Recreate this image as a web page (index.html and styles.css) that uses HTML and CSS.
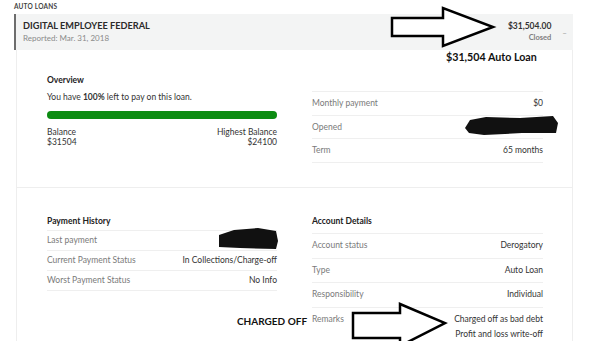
FILE: index.html
```html
<!DOCTYPE html>
<html>
<head>
    <meta charset="UTF-8">
    <title>Auto Loans</title>
    <link rel="stylesheet" href="styles.css">
</head>
<body>
<div class="page">
    <div class="section-label">AUTO LOANS</div>

    <div class="account">
        <div class="account-head">
            <div class="lender">
                <div class="lender-name">DIGITAL EMPLOYEE FEDERAL</div>
                <div class="lender-date">Reported: Mar. 31, 2018</div>
            </div>
            <div class="head-right">
                <div class="amount">
                    <div class="amount-value">$31,504.00</div>
                    <div class="amount-status">Closed</div>
                </div>
                <div class="toggle">&ndash;</div>
            </div>
        </div>

        <div class="account-body">
            <div class="block block-top">
                <div class="col">
                    <div class="col-title">Overview</div>
                    <div class="overview-text">You have <b>100%</b> left to pay on this loan.</div>
                    <div class="bar"><div class="bar-fill" style="width: 100%"></div></div>
                    <div class="balances">
                        <div>
                            <div>Balance</div>
                            <div>$31504</div>
                        </div>
                        <div class="right">
                            <div>Highest Balance</div>
                            <div>$24100</div>
                        </div>
                    </div>
                </div>
                <div class="col col-plain">
                    <div class="row"><span class="label">Monthly payment</span><span class="value">$0</span></div>
                    <div class="row"><span class="label">Opened</span><span class="value"></span></div>
                    <div class="row"><span class="label">Term</span><span class="value">65 months</span></div>
                </div>
            </div>

            <div class="block block-bottom">
                <div class="col history">
                    <div class="col-title">Payment History</div>
                    <div class="row"><span class="label">Last payment</span><span class="value"></span></div>
                    <div class="row"><span class="label">Current Payment Status</span><span class="value">In Collections/Charge-off</span></div>
                    <div class="row"><span class="label">Worst Payment Status</span><span class="value">No Info</span></div>
                </div>
                <div class="col details">
                    <div class="col-title">Account Details</div>
                    <div class="row"><span class="label">Account status</span><span class="value">Derogatory</span></div>
                    <div class="row"><span class="label">Type</span><span class="value">Auto Loan</span></div>
                    <div class="row"><span class="label">Responsibility</span><span class="value">Individual</span></div>
                    <div class="row remarks">
                        <span class="label">Remarks</span>
                        <span class="value">
                            <span class="line">Charged off as bad debt</span>
                            <span class="line">Profit and loss write-off</span>
                        </span>
                    </div>
                </div>
            </div>
        </div>
    </div>

    <!-- annotations drawn over the screenshot -->
    <div class="note note-loan">$31,504 Auto Loan</div>
    <div class="note note-charged">CHARGED OFF</div>
    <svg class="marks" width="600" height="341" viewBox="0 0 600 341">
        <polygon points="392,18 443,18 443,8 493,27 443,46 443,36 392,36" fill="#fff" stroke="#000" stroke-width="2.5" stroke-linejoin="miter"/>
        <polygon points="353,313 400,313 400,304 445,323 400,346 400,338 353,338" fill="#fff" stroke="#000" stroke-width="2.5"/>
        <polygon points="465,128 470,120 486,117 520,118 553,116 558,123 556,133 522,133 484,135 469,133" fill="#111"/>
        <polygon points="219,235 234,230 258,228 276,231 278,241 276,249 240,248 219,247" fill="#111"/>
    </svg>
</div>
</body>
</html>
```

FILE: styles.css
```css
body {
    margin: 0;
    font-family: Lato, "Open Sans", sans-serif;
    color: #333;
    background-color: #fff;
}
.page {
    position: relative;
    width: 600px;
    height: 341px;
    overflow: hidden;
}
.section-label {
    font-size: 6.5px;
    font-weight: bold;
    letter-spacing: 0.2px;
    color: #444;
    padding: 3px 0 0 14px;
    height: 12px;
    line-height: 8px;
    box-sizing: border-box;
}
.account {
    margin: 2px 27px 0 14px;
}
.account-head {
    display: flex;
    justify-content: space-between;
    align-items: center;
    height: 36px;
    background-color: #f3f4f4;
    border-left: 2px solid #6d6d6d;
    padding: 0 6px 0 7px;
}
.lender-name {
    font-size: 9.2px;
    font-weight: bold;
    line-height: 12px;
    color: #2b2b2b;
}
.lender-date {
    font-size: 8px;
    line-height: 12px;
    color: #8a8a8a;
}
.head-right {
    display: flex;
    align-items: center;
}
.amount {
    text-align: right;
}
.amount-value {
    font-size: 8.5px;
    font-weight: bold;
    line-height: 11px;
    color: #333;
}
.amount-status {
    font-size: 7.5px;
    font-weight: bold;
    line-height: 11px;
    color: #7f7f7f;
}
.toggle {
    font-size: 8px;
    color: #999;
    margin-left: 11px;
    padding-top: 1px;
}
.account-body {
    margin-left: 2px;
    border-left: 1px solid #eeeeee;
    border-right: 1px solid #eeeeee;
}
.block {
    display: grid;
    grid-template-columns: 230px 231px;
    column-gap: 35px;
    padding: 0 29px 0 30px;
    box-sizing: border-box;
    align-items: start;
}
.block-top {
    height: 138px;
    padding-top: 24px;
    border-bottom: 1px solid #eeeeee;
}
.block-bottom {
    padding-top: 27px;
}
.col-title {
    font-size: 8.5px;
    font-weight: bold;
    line-height: 12px;
    color: #222;
}
.overview-text {
    font-size: 8.5px;
    line-height: 12px;
    margin-top: 5px;
}
.bar {
    height: 8px;
    margin-top: 8px;
    border-radius: 4px;
    background-color: #e5e5e5;
}
.bar-fill {
    height: 8px;
    border-radius: 4px;
    background-color: #0c8c12;
}
.balances {
    display: flex;
    justify-content: space-between;
    font-size: 8.5px;
    line-height: 10px;
    margin-top: 8px;
}
.balances .right {
    text-align: right;
}
.row {
    display: flex;
    justify-content: space-between;
    border-top: 1px solid #efefef;
    font-size: 8.5px;
}
.row:last-child {
    border-bottom: 1px solid #efefef;
}
.label {
    color: #7a7a7a;
}
.value {
    color: #333;
    text-align: right;
}
.col-plain {
    padding-top: 17px;
}
.col-plain .row {
    line-height: 22.5px;
}
.history .col-title {
    height: 15px;
}
.history .row {
    line-height: 19px;
}
.details .col-title {
    height: 18px;
}
.details .row {
    line-height: 23.5px;
}
.details .remarks {
    line-height: 15px;
    padding-top: 4px;
    border-bottom: none;
}
.remarks .line {
    display: block;
}
.note {
    position: absolute;
    font-family: Lato, "Open Sans", sans-serif;
    font-weight: bold;
    color: #111;
    line-height: 14px;
}
.note-loan {
    left: 446px;
    top: 50px;
    font-size: 10.7px;
}
.note-charged {
    left: 237px;
    top: 314px;
    font-size: 10px;
}
.marks {
    position: absolute;
    left: 0;
    top: 0;
}
```
